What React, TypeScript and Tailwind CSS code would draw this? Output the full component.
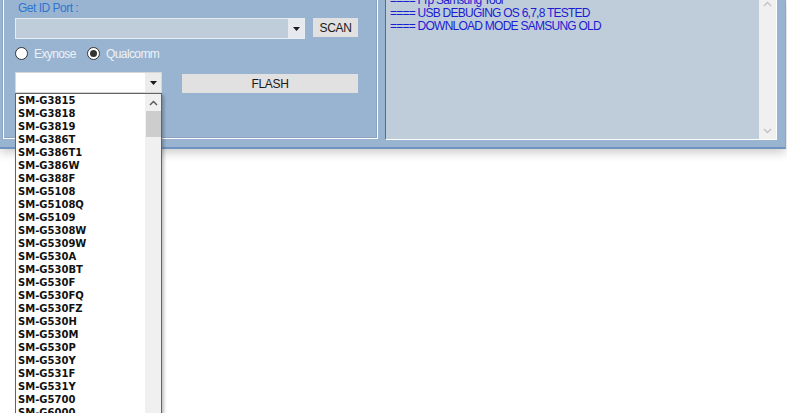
import React from "react";

const models = [
  "SM-G3815",
  "SM-G3818",
  "SM-G3819",
  "SM-G386T",
  "SM-G386T1",
  "SM-G386W",
  "SM-G388F",
  "SM-G5108",
  "SM-G5108Q",
  "SM-G5109",
  "SM-G5308W",
  "SM-G5309W",
  "SM-G530A",
  "SM-G530BT",
  "SM-G530F",
  "SM-G530FQ",
  "SM-G530FZ",
  "SM-G530H",
  "SM-G530M",
  "SM-G530P",
  "SM-G530Y",
  "SM-G531F",
  "SM-G531Y",
  "SM-G5700",
  "SM-G6000",
];

const logLines = [
  "==== Frp Samsung Tool",
  "==== USB DEBUGING OS 6,7,8 TESTED",
  "==== DOWNLOAD MODE SAMSUNG OLD",
];

function Chevron({ up, color }: { up?: boolean; color: string }) {
  return (
    <svg width="9" height="6" viewBox="0 0 9 6">
      <polyline
        points={up ? "1,5 4.5,1.5 8,5" : "1,1 4.5,4.5 8,1"}
        fill="none"
        stroke={color}
        strokeWidth="1.4"
      />
    </svg>
  );
}

function ComboArrow() {
  return (
    <svg width="7" height="4" viewBox="0 0 7 4">
      <polygon points="0,0 7,0 3.5,4" fill="#1a1a1a" />
    </svg>
  );
}

function Radio({ checked, label }: { checked?: boolean; label: string }) {
  return (
    <div className="flex items-center">
      <div className="flex h-[13px] w-[13px] items-center justify-center rounded-full border border-[#333333] bg-white">
        {checked && <div className="h-[7px] w-[7px] rounded-full bg-[#333333]" />}
      </div>
      <span className="ml-[6px] text-[12px] leading-[14px] tracking-[-0.6px] text-[#edf2f7]">{label}</span>
    </div>
  );
}

export default function App() {
  return (
    <div className="relative h-[413px] w-[787px] overflow-hidden bg-white font-['Liberation_Sans',Arial,sans-serif]">
      {/* window body */}
      <div className="flex h-[149px] w-[786px] gap-[7px] border-r border-b-2 border-r-[#8aa6c8] border-b-[#6f93c0] bg-[#99b4d1] pl-[3px] shadow-[0_3px_10px_rgba(0,0,0,0.22)]">
        {/* group box */}
        <div className="h-[139px] w-[375px] shrink-0 border-x border-b border-white pl-[11px] shadow-[inset_-1px_-1px_0_#8ca4bf,-1px_0_0_#8ca4bf]">
          <div className="pt-[1px] pl-[3px] text-[12px] leading-[14px] tracking-[-0.5px] text-[#2f74d0]">Get ID Port :</div>

          <div className="mt-[3px] flex items-start">
            <div className="flex h-[21px] w-[290px] border border-[#e8edf2] bg-[#bfcddb]">
              <div className="flex-1" />
              <div className="flex w-[16px] items-center justify-center bg-[#e6eaee]">
                <ComboArrow />
              </div>
            </div>
            <div className="ml-[8px] flex h-[19px] w-[45px] items-center justify-center bg-[#e1e1e1] text-[12px] tracking-[-0.3px] text-[#1a1a1a]">
              SCAN
            </div>
          </div>

          <div className="mt-[8px] flex h-[13px] items-center">
            <div className="w-[72px]">
              <Radio label="Exynose" />
            </div>
            <Radio checked label="Qualcomm" />
          </div>

          <div className="mt-[12px] flex items-start">
            <div className="flex h-[21px] w-[147px] border border-[#d6d6d6] bg-white">
              <div className="flex-1" />
              <div className="flex w-[16px] items-center justify-center bg-[#ececec]">
                <ComboArrow />
              </div>
            </div>
            <div className="mt-[2px] ml-[20px] flex h-[19px] w-[176px] items-center justify-center bg-[#e1e1e1] text-[12px] tracking-[-0.3px] text-[#1a1a1a]">
              FLASH
            </div>
          </div>
        </div>

        {/* log textbox */}
        <div className="flex h-[140px] w-[392px] shrink-0 overflow-hidden border-l border-r border-b border-l-[#6a6a6a] border-r-white border-b-white bg-[#bfcddb]">
          <div className="-mt-[6px] flex-1 pl-[4px]">
            {logLines.map((line) => (
              <div key={line} className="text-[12px] leading-[13px] tracking-[-0.75px] whitespace-pre text-[#1c1cd2]">
                {line}
              </div>
            ))}
          </div>
          <div className="flex w-[17px] flex-col items-center justify-between bg-[#f0f0f0] pt-[1px] pb-[5px]">
            <Chevron up color="#c2c2c2" />
            <Chevron color="#c2c2c2" />
          </div>
        </div>
      </div>

      {/* dropdown list */}
      <div className="absolute top-[93px] left-[15px] flex h-[330px] w-[147px] border border-[#646464] bg-white shadow-[2px_2px_3px_rgba(0,0,0,0.25)]">
        <div className="flex-1 pl-[2px]">
          {models.map((m) => (
            <div key={m} className="h-[13px] font-['DejaVu_Sans',sans-serif] text-[10px] leading-[13px] font-bold text-[#111111]">
              {m}
            </div>
          ))}
        </div>
        <div className="flex w-[16px] flex-col items-center bg-[#f0f0f0]">
          <div className="flex h-[17px] items-center justify-center">
            <Chevron up color="#555555" />
          </div>
          <div className="h-[26px] w-[15px] bg-[#cdcdcd]" />
        </div>
      </div>
    </div>
  );
}
